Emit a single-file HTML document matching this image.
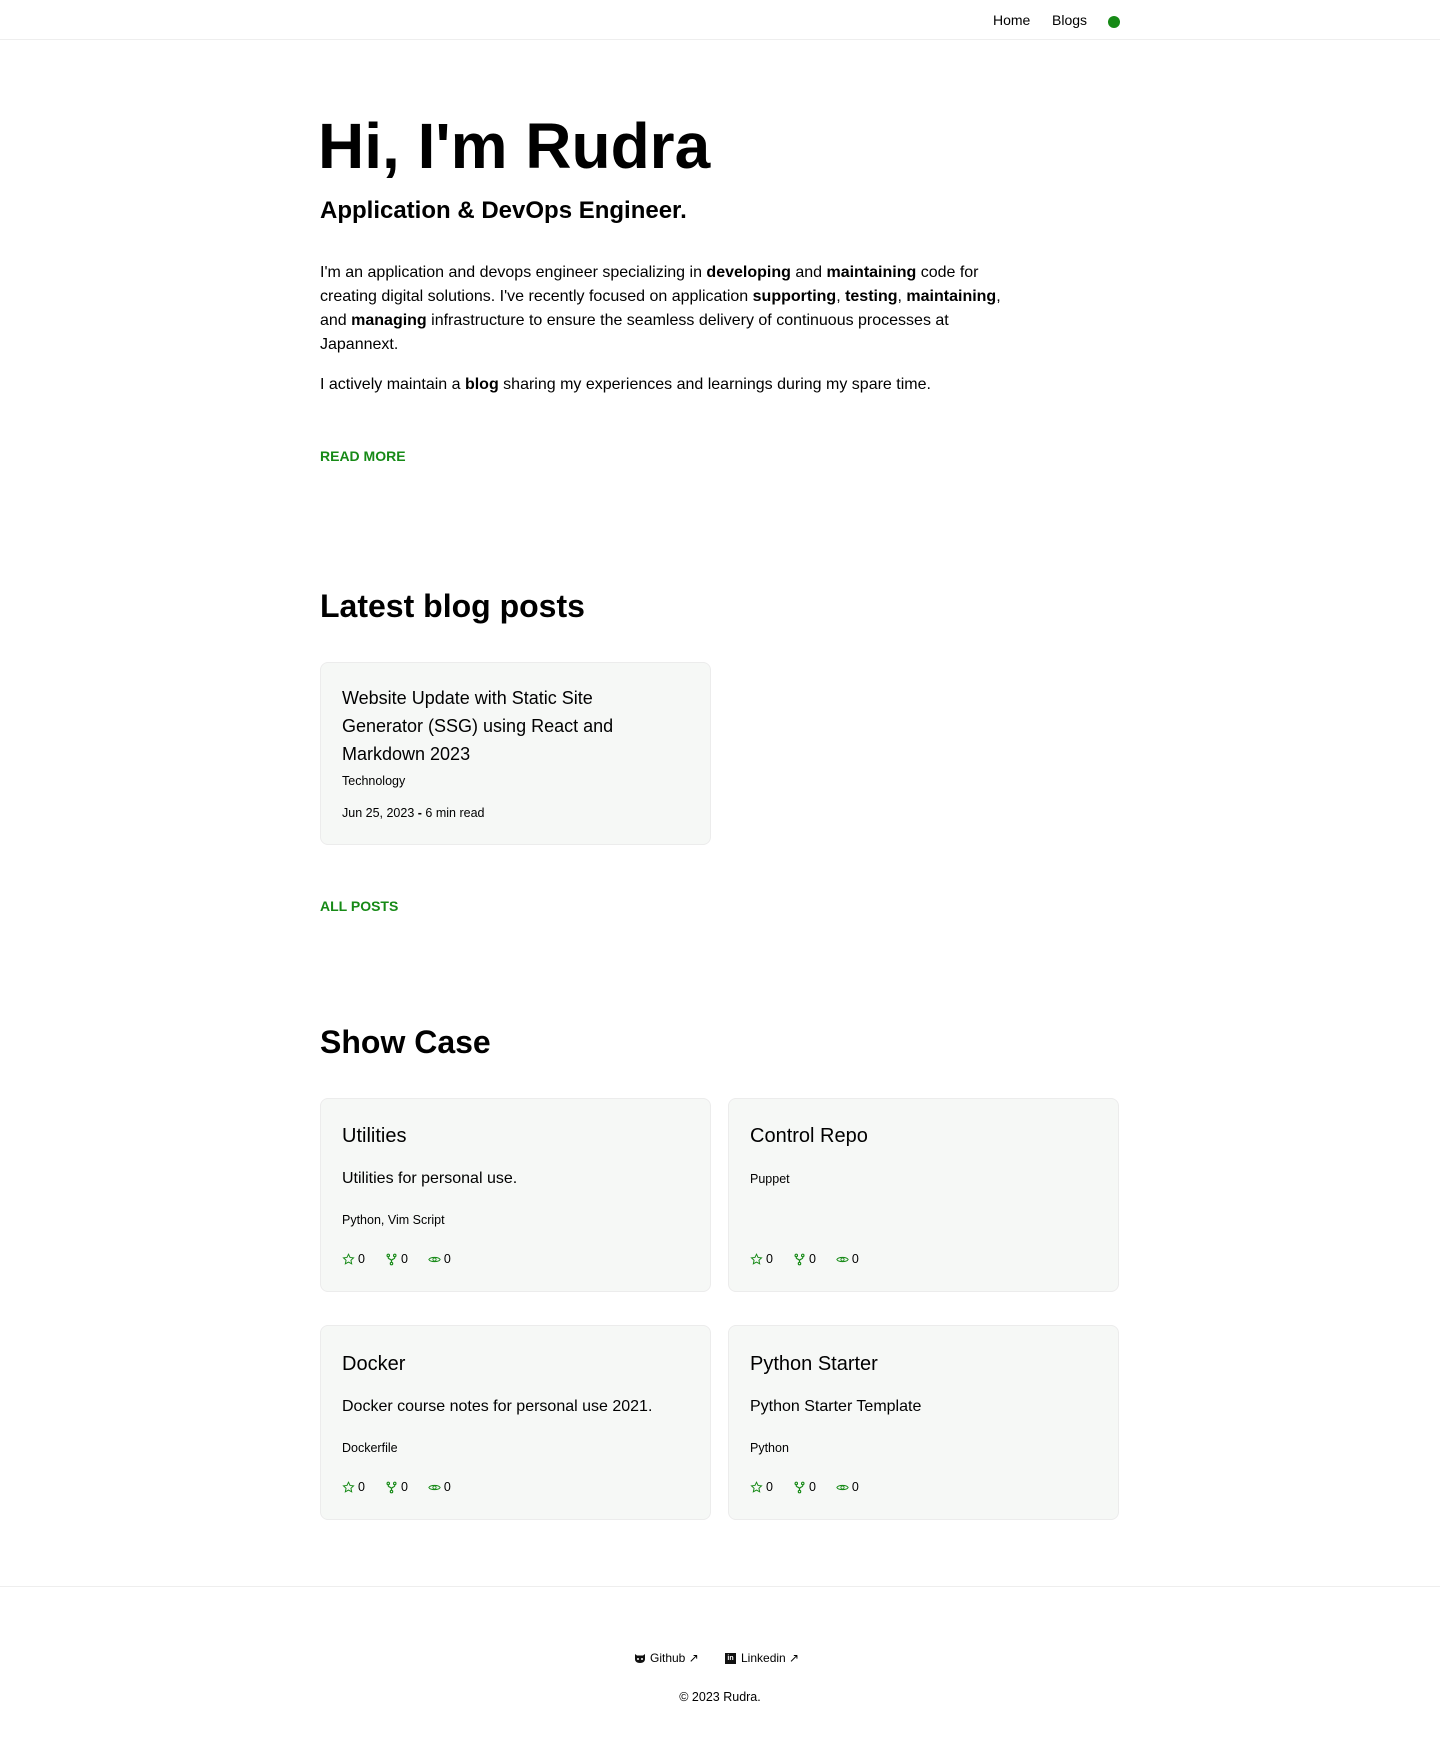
<!DOCTYPE html>
<html><head><meta charset="utf-8"><style>
*{box-sizing:border-box;margin:0;padding:0}
body{width:1440px;height:1757px;font-family:"Liberation Sans",Arial,sans-serif;color:#000;background:#fff;position:relative;overflow:hidden}
.a{position:absolute;white-space:nowrap}
nav{position:absolute;top:0;left:0;width:1440px;height:40px;border-bottom:1px solid #eee}
.g{color:#168a16;font-weight:bold;font-size:14px}
.card{position:absolute;background:#f6f8f6;border:1px solid #ececec;border-radius:8px;width:391px}
.card .a{left:21px}
.t{font-size:20px}
.d{font-size:16px}
.s{font-size:12.5px}
.st{font-size:12.5px;display:flex;gap:20px;align-items:center}
.st span{display:flex;align-items:center;gap:3px}
p{font-size:16px;line-height:24px;width:700px}
</style></head><body>
<nav>
<div class="a" style="left:993px;top:12px;font-size:14px">Home</div>
<div class="a" style="left:1052px;top:12px;font-size:14px">Blogs</div>
<div class="a" style="left:1108px;top:16px;width:12px;height:12px;border-radius:50%;background:#168a16"></div>
</nav>
<div class="a" style="left:318px;top:109px;font-size:64px;font-weight:bold">Hi, I'm Rudra</div>
<div class="a" style="left:320px;top:197px;font-size:24px;font-weight:bold">Application &amp; DevOps Engineer.</div>
<p class="a" style="left:320px;top:261px;white-space:normal">I'm an application and devops engineer specializing in <b>developing</b> and <b>maintaining</b> code for creating digital solutions. I've recently focused on application <b>supporting</b>, <b>testing</b>, <b>maintaining</b>, and <b>managing</b> infrastructure to ensure the seamless delivery of continuous processes at Japannext.</p>
<p class="a" style="left:320px;top:373px">I actively maintain a <b>blog</b> sharing my experiences and learnings during my spare time.</p>
<div class="a g" style="left:320px;top:448px">READ MORE</div>
<div class="a" style="left:320px;top:588px;font-size:32px;font-weight:bold">Latest blog posts</div>
<div class="card" style="left:320px;top:662px;height:183px">
<div class="a" style="top:21px;font-size:18px;line-height:28px;white-space:normal;width:320px">Website Update with Static Site Generator (SSG) using React and Markdown 2023</div>
<div class="a s" style="top:111px">Technology</div>
<div class="a s" style="top:143px">Jun 25, 2023 <b>-</b> 6 min read</div>
</div>
<div class="a g" style="left:320px;top:898px">ALL POSTS</div>
<div class="a" style="left:320px;top:1024px;font-size:32px;font-weight:bold">Show Case</div>
<svg width="0" height="0" style="position:absolute"><defs>
<symbol id="star" viewBox="0 0 16 16"><path d="M8 1.5l1.9 4 4.3.5-3.2 3 .9 4.3L8 11.2l-3.9 2.1.9-4.3-3.2-3 4.3-.5z" fill="none" stroke="#168a16" stroke-width="1.2"/></symbol>
<symbol id="fork" viewBox="0 0 16 16"><g fill="none" stroke="#168a16" stroke-width="1.4"><circle cx="4" cy="3" r="1.5"/><circle cx="12" cy="3" r="1.5"/><circle cx="8" cy="13" r="1.5"/><path d="M4 4.5v1.5c0 1.5 4 1.5 4 3.5v2M12 4.5v1.5c0 1.5-4 1.5-4 3.5"/></g></symbol>
<symbol id="eye" viewBox="0 0 16 16"><g fill="none" stroke="#168a16" stroke-width="1.1"><path d="M1 8c2-3.5 12-3.5 14 0-2 3.5-12 3.5-14 0z"/><circle cx="8" cy="8" r="2"/></g></symbol>
</defs></svg>
<div class="card" style="left:320px;top:1098px;height:194px">
<div class="a t" style="top:26px">Utilities</div>
<div class="a d" style="top:71px">Utilities for personal use.</div>
<div class="a s" style="top:114px">Python, Vim Script</div>
<div class="a st" style="top:153px"><span><svg width="13" height="13"><use href="#star"/></svg>0</span><span><svg width="13" height="13"><use href="#fork"/></svg>0</span><span><svg width="13" height="13"><use href="#eye"/></svg>0</span></div>
</div>
<div class="card" style="left:728px;top:1098px;height:194px">
<div class="a t" style="top:26px">Control Repo</div>
<div class="a s" style="top:73px">Puppet</div>
<div class="a st" style="top:153px"><span><svg width="13" height="13"><use href="#star"/></svg>0</span><span><svg width="13" height="13"><use href="#fork"/></svg>0</span><span><svg width="13" height="13"><use href="#eye"/></svg>0</span></div>
</div>
<div class="card" style="left:320px;top:1325px;height:195px">
<div class="a t" style="top:27px">Docker</div>
<div class="a d" style="top:72px">Docker course notes for personal use 2021.</div>
<div class="a s" style="top:115px">Dockerfile</div>
<div class="a st" style="top:154px"><span><svg width="13" height="13"><use href="#star"/></svg>0</span><span><svg width="13" height="13"><use href="#fork"/></svg>0</span><span><svg width="13" height="13"><use href="#eye"/></svg>0</span></div>
</div>
<div class="card" style="left:728px;top:1325px;height:195px">
<div class="a t" style="top:27px">Python Starter</div>
<div class="a d" style="top:72px">Python Starter Template</div>
<div class="a s" style="top:115px">Python</div>
<div class="a st" style="top:154px"><span><svg width="13" height="13"><use href="#star"/></svg>0</span><span><svg width="13" height="13"><use href="#fork"/></svg>0</span><span><svg width="13" height="13"><use href="#eye"/></svg>0</span></div>
</div>
<div class="a" style="left:0;top:1586px;width:1440px;border-top:1px solid #eee"></div>
<div class="a" style="left:634px;top:1651px;font-size:12px;display:flex;align-items:center;gap:4px">
<svg width="12" height="11" viewBox="0 0 12 11"><path d="M1 1l2 1.5h6L11 1v5c0 2.5-2 4-5 4S1 8.5 1 6z" fill="#111"/><circle cx="4" cy="6" r="1" fill="#fff"/><circle cx="8" cy="6" r="1" fill="#fff"/></svg>Github ↗</div>
<div class="a" style="left:725px;top:1651px;font-size:12px;display:flex;align-items:center;gap:5px">
<span style="display:inline-block;width:11px;height:11px;background:#111;color:#fff;font-size:7px;font-weight:bold;line-height:11px;text-align:center">in</span>Linkedin ↗</div>
<div class="a" style="left:0;width:1440px;text-align:center;top:1690px;font-size:12.5px">© 2023 Rudra.</div>
</body></html>
